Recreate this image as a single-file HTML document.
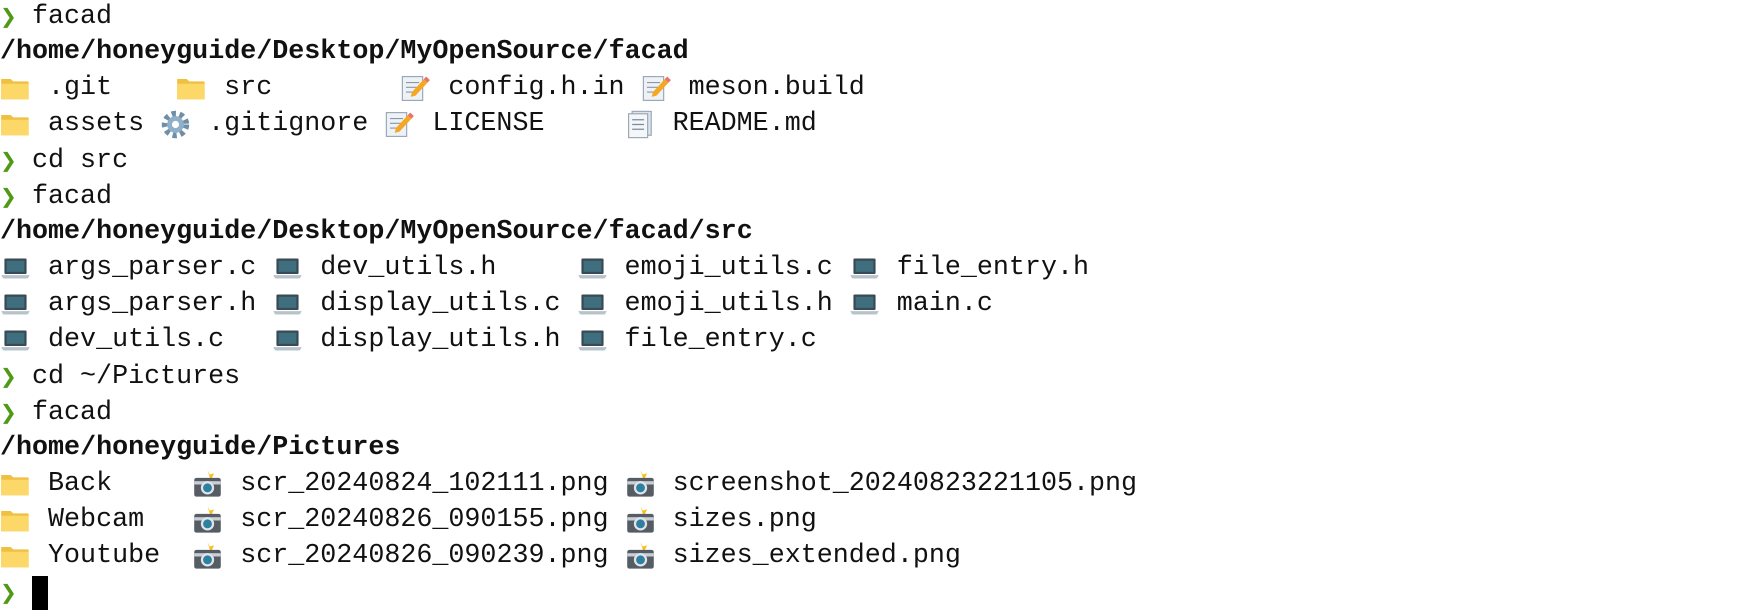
<!DOCTYPE html>
<html><head><meta charset="utf-8"><style>
html,body{margin:0;padding:0;background:#fff;width:1764px;height:610px;overflow:hidden}
.t{position:absolute;left:0;top:-2px;font-family:"Liberation Mono","DejaVu Sans Mono",monospace;font-size:26.7px;color:#111}
.l{height:36px;line-height:36px;white-space:pre}
b{font-weight:bold}
.p{color:#4e9a16;font-family:"DejaVu Sans",sans-serif;font-weight:bold;display:inline-block;width:32px;font-size:20px}
.i{display:inline-block;width:2ch;height:36px;vertical-align:top;position:relative}
.i svg{position:absolute;left:0px;top:4px;width:31px;height:29px}
.cur{display:inline-block;width:1ch;height:34px;background:#000;vertical-align:top;margin-top:2px}
</style></head><body>
<div class="t"><div class="l"><span class="p">❯</span>facad</div><div class="l"><b>/home/honeyguide/Desktop/MyOpenSource/facad</b></div><div class="l"><span class="i F"></span> .git    <span class="i F"></span> src        <span class="i M"></span> config.h.in <span class="i M"></span> meson.build</div><div class="l"><span class="i F"></span> assets <span class="i G"></span> .gitignore <span class="i M"></span> LICENSE     <span class="i D"></span> README.md</div><div class="l"><span class="p">❯</span>cd src</div><div class="l"><span class="p">❯</span>facad</div><div class="l"><b>/home/honeyguide/Desktop/MyOpenSource/facad/src</b></div><div class="l"><span class="i L"></span> args_parser.c <span class="i L"></span> dev_utils.h     <span class="i L"></span> emoji_utils.c <span class="i L"></span> file_entry.h</div><div class="l"><span class="i L"></span> args_parser.h <span class="i L"></span> display_utils.c <span class="i L"></span> emoji_utils.h <span class="i L"></span> main.c</div><div class="l"><span class="i L"></span> dev_utils.c   <span class="i L"></span> display_utils.h <span class="i L"></span> file_entry.c</div><div class="l"><span class="p">❯</span>cd ~/Pictures</div><div class="l"><span class="p">❯</span>facad</div><div class="l"><b>/home/honeyguide/Pictures</b></div><div class="l"><span class="i F"></span> Back     <span class="i C"></span> scr_20240824_102111.png <span class="i C"></span> screenshot_20240823221105.png</div><div class="l"><span class="i F"></span> Webcam   <span class="i C"></span> scr_20240826_090155.png <span class="i C"></span> sizes.png</div><div class="l"><span class="i F"></span> Youtube  <span class="i C"></span> scr_20240826_090239.png <span class="i C"></span> sizes_extended.png</div><div class="l"><span class="p">❯</span><span class="cur"></span></div></div>
<script>
var S={
F:'<svg viewBox="0 0 26 24"><path d="M1 4h8l2 2h13v15H1z" fill="#f0c040"/><path d="M1 8h23v13H1z" fill="#fbd867"/></svg>',
M:'<svg viewBox="0 0 26 24"><rect x="2" y="2" width="17" height="20" fill="#eef2f6" stroke="#9aa8b8"/><path d="M5 7h11M5 11h11M5 15h8" stroke="#8899aa"/><path d="M22 2l3 3-12 13-4 1 1-4z" fill="#f5a623"/><path d="M22 2l3 3-2 2-3-3z" fill="#e57373"/></svg>',
D:'<svg viewBox="0 0 26 24"><rect x="6" y="1" width="16" height="20" fill="#dde4ec" stroke="#9aa8b8"/><rect x="3" y="3" width="16" height="20" fill="#f4f6f8" stroke="#9aa8b8"/><path d="M6 8h10M6 12h10M6 16h10" stroke="#7a8aa0"/></svg>',
G:'<svg viewBox="0 0 26 24"><circle cx="13" cy="12" r="9" fill="none" stroke="#6f8fa8" stroke-width="5" stroke-dasharray="3.5 3"/><circle cx="13" cy="12" r="7" fill="#8fb0c8"/><circle cx="13" cy="12" r="3" fill="#fff"/></svg>',
L:'<svg viewBox="0 0 28 24"><rect x="4" y="3" width="20" height="14" rx="1" fill="#3a4a55"/><rect x="6" y="5" width="16" height="10" fill="#3f6f7e"/><path d="M1 18h26l-2 3H3z" fill="#b8c4cc"/></svg>',
C:'<svg viewBox="0 0 28 26"><path d="M14 0l2 4 4-1-2 4 4 1-5 2z" fill="#f7c11a"/><rect x="2" y="7" width="24" height="17" rx="2" fill="#555c63"/><rect x="2" y="10" width="24" height="3" fill="#c8ced4"/><circle cx="14" cy="16" r="6" fill="#dfe4e8"/><circle cx="14" cy="16" r="4" fill="#2f7fa0"/></svg>'};
document.querySelectorAll('.i').forEach(function(e){for(var k in S)if(e.classList.contains(k))e.innerHTML=S[k];});
</script>
</body></html>
